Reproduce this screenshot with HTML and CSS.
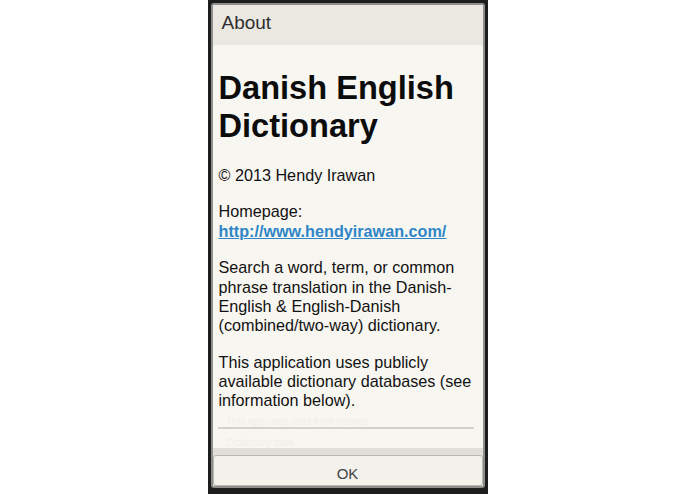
FILE: index.html
```
<!DOCTYPE html>
<html>
<head>
<meta charset="utf-8">
<link rel="stylesheet" href="styles.css">
</head>
<body>
<div class="device">
  <div class="dialog">
    <div class="title">About</div>
    <div class="content">
      <h1 class="heading">Danish English Dictionary</h1>
      <p class="para">© 2013 Hendy Irawan</p>
      <p class="para">Homepage:<br><a class="link" href="#">http://www.hendyirawan.com/</a></p>
      <p class="para">Search a word, term, or common phrase translation in the Danish-English &amp; English-Danish (combined/two-way) dictionary.</p>
      <p class="para">This application uses publicly available dictionary databases (see information below).</p>
      <p class="ghost">This app uses data from various</p>
      <hr class="sep">
      <p class="ghost ghost2">Dictionary data</p>
    </div>
    <div class="fade"></div>
    <div class="buttons">
      <div class="btn">OK</div>
    </div>
  </div>
</div>
</body>
</html>
```
FILE: styles.css
```
html, body {
  margin: 0;
  padding: 0;
  background: #ffffff;
  height: 494px;
  overflow: hidden;
}
body {
  font-family: "Liberation Sans", Arial, sans-serif;
}
.device {
  width: 280px;
  height: 494px;
  margin: 0 auto;
  background: #1d1d1d;
  padding: 3px 3px 6px 3px;
  box-sizing: border-box;
  display: flex;
}
.dialog {
  flex: 1;
  display: flex;
  flex-direction: column;
  border: 2px solid #8e8e8e;
  border-radius: 3px;
  background: #f8f6f1;
  overflow: hidden;
}
.title {
  height: 40px;
  flex: none;
  background: #ebe8e2;
  color: #2e2e2e;
  font-size: 19px;
  line-height: 35px;
  padding-left: 9px;
}
.content {
  flex: 1;
  min-height: 0;
  overflow: hidden;
  padding: 0 7px 0 6px;
  background: #f8f6f1;
  color: #121212;
}
.heading {
  font-size: 32.6px;
  line-height: 38px;
  font-weight: bold;
  margin: 23.5px 0 21.5px 0;
  color: #0c0c0c;
}
.para {
  font-size: 16.2px;
  line-height: 19.3px;
  margin: 0 0 17.2px 0;
}
.link {
  color: #2e86c8;
  font-weight: bold;
  text-decoration: underline;
}
.ghost {
  font-size: 10px;
  line-height: 11px;
  color: #f0eee8;
  margin: -12px 0 0 8px;
}
.ghost2 {
  margin: 8px 0 0 8px;
}
.sep {
  border: 0;
  height: 2px;
  background: #d4d1cb;
  margin: 0 2px 0 -1px;
}
.fade {
  height: 7px;
  flex: none;
  background: #dfdcd6;
  margin-top: -7px;
  position: relative;
  opacity: 0.9;
}
.buttons {
  flex: none;
  height: 31px;
  display: flex;
  background: #e1ded8;
}
.btn {
  flex: 1;
  border: 1px solid #b9b6b0;
  border-radius: 3px;
  background: #f3f1ec;
  color: #444444;
  font-size: 15px;
  padding-top: 5px;
  display: flex;
  align-items: center;
  justify-content: center;
}
```
